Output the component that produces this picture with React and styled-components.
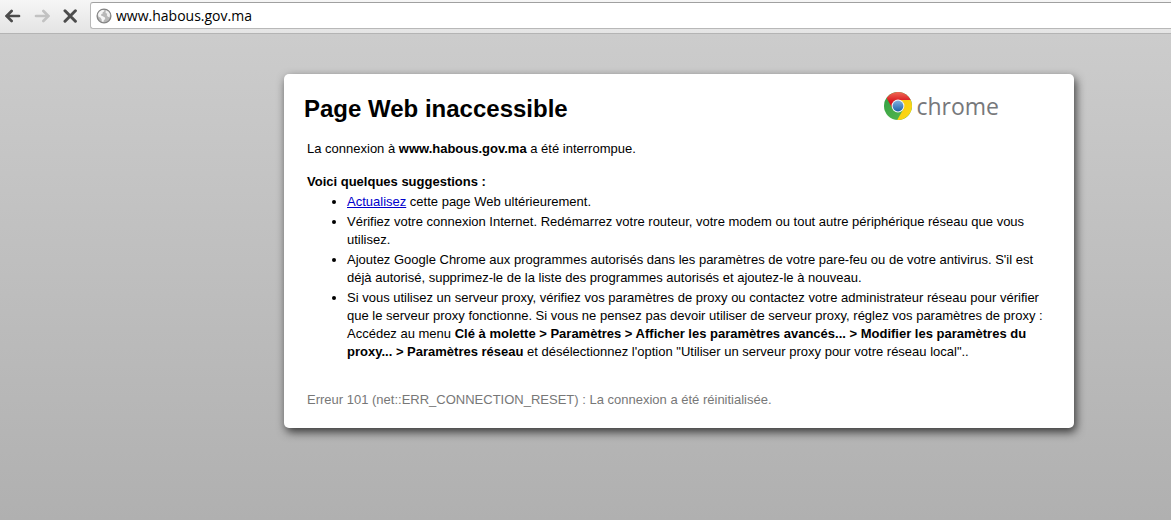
import React, { useState } from "react";
import styled, { createGlobalStyle } from "styled-components";

const HOST = "www.habous.gov.ma";

export default function App() {
  const [address, setAddress] = useState(HOST);

  return (
    <>
      <GlobalStyle />
      <Window>
        <Toolbar>
          <NavButton type="button" aria-label="Précédent" $color="#4c4c4c">
            <ArrowIcon />
          </NavButton>
          <NavButton
            type="button"
            aria-label="Suivant"
            $color="#c2c2c2"
            disabled
          >
            <ArrowIcon flipped />
          </NavButton>
          <NavButton type="button" aria-label="Arrêter" $color="#4c4c4c">
            <StopIcon />
          </NavButton>
          <AddressBar>
            <GlobeIcon />
            <AddressInput
              type="text"
              aria-label="Adresse"
              spellCheck={false}
              value={address}
              onChange={(e) => setAddress(e.target.value)}
            />
          </AddressBar>
        </Toolbar>
        <Page>
          <Card>
            <CardHeader>
              <Title>Page Web inaccessible</Title>
              <Brand>
                <ChromeLogo />
                <BrandName>chrome</BrandName>
              </Brand>
            </CardHeader>
            <Content>
              <Summary>
                La connexion à <b>{HOST}</b> a été interrompue.
              </Summary>
              <Subtitle>Voici quelques suggestions :</Subtitle>
              <Suggestions>
                <Suggestion>
                  <Link href="#">Actualisez</Link> cette page Web
                  ultérieurement.
                </Suggestion>
                <Suggestion>
                  Vérifiez votre connexion Internet. Redémarrez votre routeur,
                  votre modem ou tout autre périphérique réseau que vous
                  utilisez.
                </Suggestion>
                <Suggestion>
                  Ajoutez Google Chrome aux programmes autorisés dans les
                  paramètres de votre pare-feu ou de votre antivirus. S'il est
                  déjà autorisé, supprimez-le de la liste des programmes
                  autorisés et ajoutez-le à nouveau.
                </Suggestion>
                <Suggestion>
                  Si vous utilisez un serveur proxy, vérifiez vos paramètres de
                  proxy ou contactez votre administrateur réseau pour vérifier
                  que le serveur proxy fonctionne. Si vous ne pensez pas devoir
                  utiliser de serveur proxy, réglez vos paramètres de
                  proxy&nbsp;: Accédez au menu{" "}
                  <b>
                    Clé à molette &gt; Paramètres &gt; Afficher les paramètres
                    avancés... &gt; Modifier les paramètres du proxy... &gt;
                    Paramètres réseau
                  </b>{" "}
                  et désélectionnez l'option "Utiliser un serveur proxy pour
                  votre réseau local"..
                </Suggestion>
              </Suggestions>
              <ErrorCode>
                Erreur 101 (net::ERR_CONNECTION_RESET) : La connexion a été
                réinitialisée.
              </ErrorCode>
            </Content>
          </Card>
        </Page>
      </Window>
    </>
  );
}

const ArrowIcon = ({ flipped }) => (
  <svg width="16" height="14" viewBox="0 0 16 14" aria-hidden="true">
    <g
      transform={flipped ? "translate(16 0) scale(-1 1)" : undefined}
      fill="none"
      stroke="currentColor"
      strokeWidth="2.7"
      strokeLinecap="round"
    >
      <path d="M6.600 2 1.600 7l5 5" />
      <path d="M2 7h12" />
    </g>
  </svg>
);

const StopIcon = () => (
  <svg width="14" height="14" viewBox="0 0 14 14" aria-hidden="true">
    <path
      d="M2 1.800l10.400 10.400M12.400 1.800 2 12.200"
      stroke="currentColor"
      strokeWidth="3"
      strokeLinecap="round"
    />
  </svg>
);

const GlobeIcon = () => (
  <svg width="16" height="16" viewBox="0 0 16 16" aria-hidden="true">
    <circle cx="8" cy="8" r="6.900" fill="#b8b8b8" stroke="#858585" strokeWidth="1.300" />
    <path
      d="M2 6.500C2.400 4.200 4 2.500 6.200 1.900L8.400 2.200 8 3.600 6.600 4.200 6.800 5.400 5.400 6 5 7.400 6.800 8.200 9 9.400 9.200 11 7.800 12.200 7.400 14 5.800 13.400 5.600 11.200 4.400 9.600 2.400 8.600z"
      fill="#f6f6f6"
    />
    <path
      d="M9.800 2.300c2.200.6 3.700 2.200 4.200 4.400l-.4 2.500-1.800-.4-1-1.600.4-1.400-1.600-.8z"
      fill="#f0f0f0"
    />
  </svg>
);

const ChromeLogo = () => (
  <svg width="28" height="28" viewBox="0 0 28 28" aria-hidden="true">
    <defs>
      <linearGradient id="red" x1="0" y1="0" x2="0" y2="1">
        <stop offset="0" stopColor="#ee6a55" />
        <stop offset="0.6" stopColor="#d8121c" />
      </linearGradient>
      <linearGradient id="green" x1="0" y1="0" x2="1" y2="1">
        <stop offset="0" stopColor="#2f9e42" />
        <stop offset="1" stopColor="#5dba50" />
      </linearGradient>
      <linearGradient id="yellow" x1="0" y1="0" x2="1" y2="1">
        <stop offset="0" stopColor="#fbc70f" />
        <stop offset="1" stopColor="#fbdc16" />
      </linearGradient>
      <linearGradient id="blue" x1="0" y1="0" x2="0" y2="1">
        <stop offset="0" stopColor="#7fb0de" />
        <stop offset="1" stopColor="#1d62ab" />
      </linearGradient>
    </defs>
    <circle cx="14" cy="14" r="14" fill="url(#green)" />
    <path d="M14 8h12.600A14 14 0 0 1 13.200 28L19.400 17z" fill="url(#yellow)" />
    <path
      d="M2.600 5.900A14 14 0 0 1 26.700 8H14a6.200 6.200 0 0 0-5.500 8.600z"
      fill="url(#red)"
    />
    <circle cx="14" cy="14" r="6.400" fill="#f4f6f8" />
    <circle cx="14" cy="14" r="5.400" fill="url(#blue)" />
  </svg>
);

const GlobalStyle = createGlobalStyle`
  * {
    box-sizing: border-box;
  }
  body {
    margin: 0;
    color: #000;
    font-family: "Liberation Sans", Arial, sans-serif;
    font-size: 13px;
    line-height: 18px;
  }
`;

const Window = styled.div`
  min-height: 100vh;
  display: flex;
  flex-direction: column;
`;

const Toolbar = styled.header`
  display: flex;
  align-items: center;
  gap: 13px;
  padding: 2px 0 4px 5px;
  background: linear-gradient(#f6f6f6, #e4e4e4);
  border-bottom: 1px solid #b4b4b4;
`;

const NavButton = styled.button`
  display: flex;
  padding: 0;
  border: 0;
  background: none;
  color: ${(props) => props.$color};
`;

const AddressBar = styled.div`
  flex: 1;
  display: flex;
  align-items: center;
  gap: 4px;
  height: 27px;
  padding-left: 5px;
  background: #fff;
  border: 1px solid #b8b8b8;
  border-top-color: #a0a0a0;
  border-right: 0;
  border-radius: 3px 0 0 3px;
`;

const AddressInput = styled.input`
  flex: 1;
  min-width: 0;
  padding: 0;
  border: 0;
  outline: 0;
  background: none;
  color: #000;
  font-family: "Open Sans", "Noto Sans", sans-serif;
  font-size: 14px;
`;

const Page = styled.main`
  flex: 1;
  padding: 40px 8% 40px 284px;
  background: linear-gradient(#cccccc, #b0b0b0);
`;

const Card = styled.section`
  max-width: 790px;
  padding: 14px 20px 19px;
  background: #fff;
  border-radius: 5px;
  box-shadow: 2px 4px 10px rgba(0, 0, 0, 0.7);
`;

const CardHeader = styled.div`
  display: flex;
  align-items: flex-start;
  justify-content: space-between;
  padding-right: 55px;
`;

const Title = styled.h1`
  margin: 0;
  font-size: 24px;
  line-height: 42px;
`;

const Brand = styled.div`
  display: flex;
  align-items: center;
  gap: 4px;
`;

const BrandName = styled.span`
  color: #77787b;
  font-family: "Open Sans", "Noto Sans", sans-serif;
  font-size: 23px;
  line-height: 36px;
`;

const Content = styled.div`
  padding: 10px 3px 0;
`;

const Summary = styled.p`
  margin: 0 0 15px;
`;

const Subtitle = styled.h2`
  margin: 0;
  font-size: 13px;
  line-height: 18px;
`;

const Suggestions = styled.ul`
  margin: 0;
  padding-left: 40px;
`;

const Suggestion = styled.li`
  padding-top: 2px;
`;

const Link = styled.a`
  color: #0000cc;
`;

const ErrorCode = styled.p`
  margin: 30px 0 0;
  color: #777;
`;
